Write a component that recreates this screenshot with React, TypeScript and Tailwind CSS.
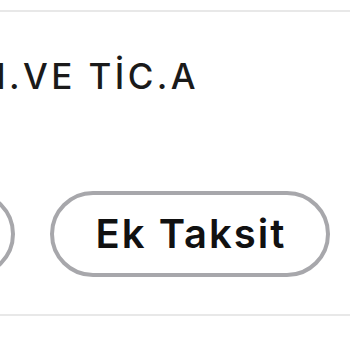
export default function App() {
  return (
    <div className="w-[350px] h-[350px] bg-white overflow-hidden" style={{ fontFamily: 'Inter, "Noto Sans", sans-serif' }}>
      <div className="h-[10px]" />
      <div className="h-[2px] bg-[#e8e8e8]" />
      <div className="h-[46px]" />
      <div className="flex justify-end w-[199px] h-[36px] items-center">
        <div className="whitespace-nowrap text-[35px] leading-[36px] font-medium text-[#1a1a1a] tracking-[3.4px]">SAN.VE TİC.A</div>
      </div>
      <div className="h-[97px]" />
      <div className="flex gap-[35px] ml-[-185px] h-[86px]">
        <div className="w-[200px] shrink-0 h-[86px] rounded-full border-4 border-[#a7a7ab]" />
        <div className="w-[280px] shrink-0 h-[86px] rounded-full border-4 border-[#a7a7ab] flex items-center justify-center">
          <span className="text-[40px] font-semibold text-[#111] leading-none tracking-[2px] pl-[2px]">Ek Taksit</span>
        </div>
      </div>
      <div className="h-[37px]" />
      <div className="h-[2px] bg-[#e8e8e8]" />
    </div>
  );
}
